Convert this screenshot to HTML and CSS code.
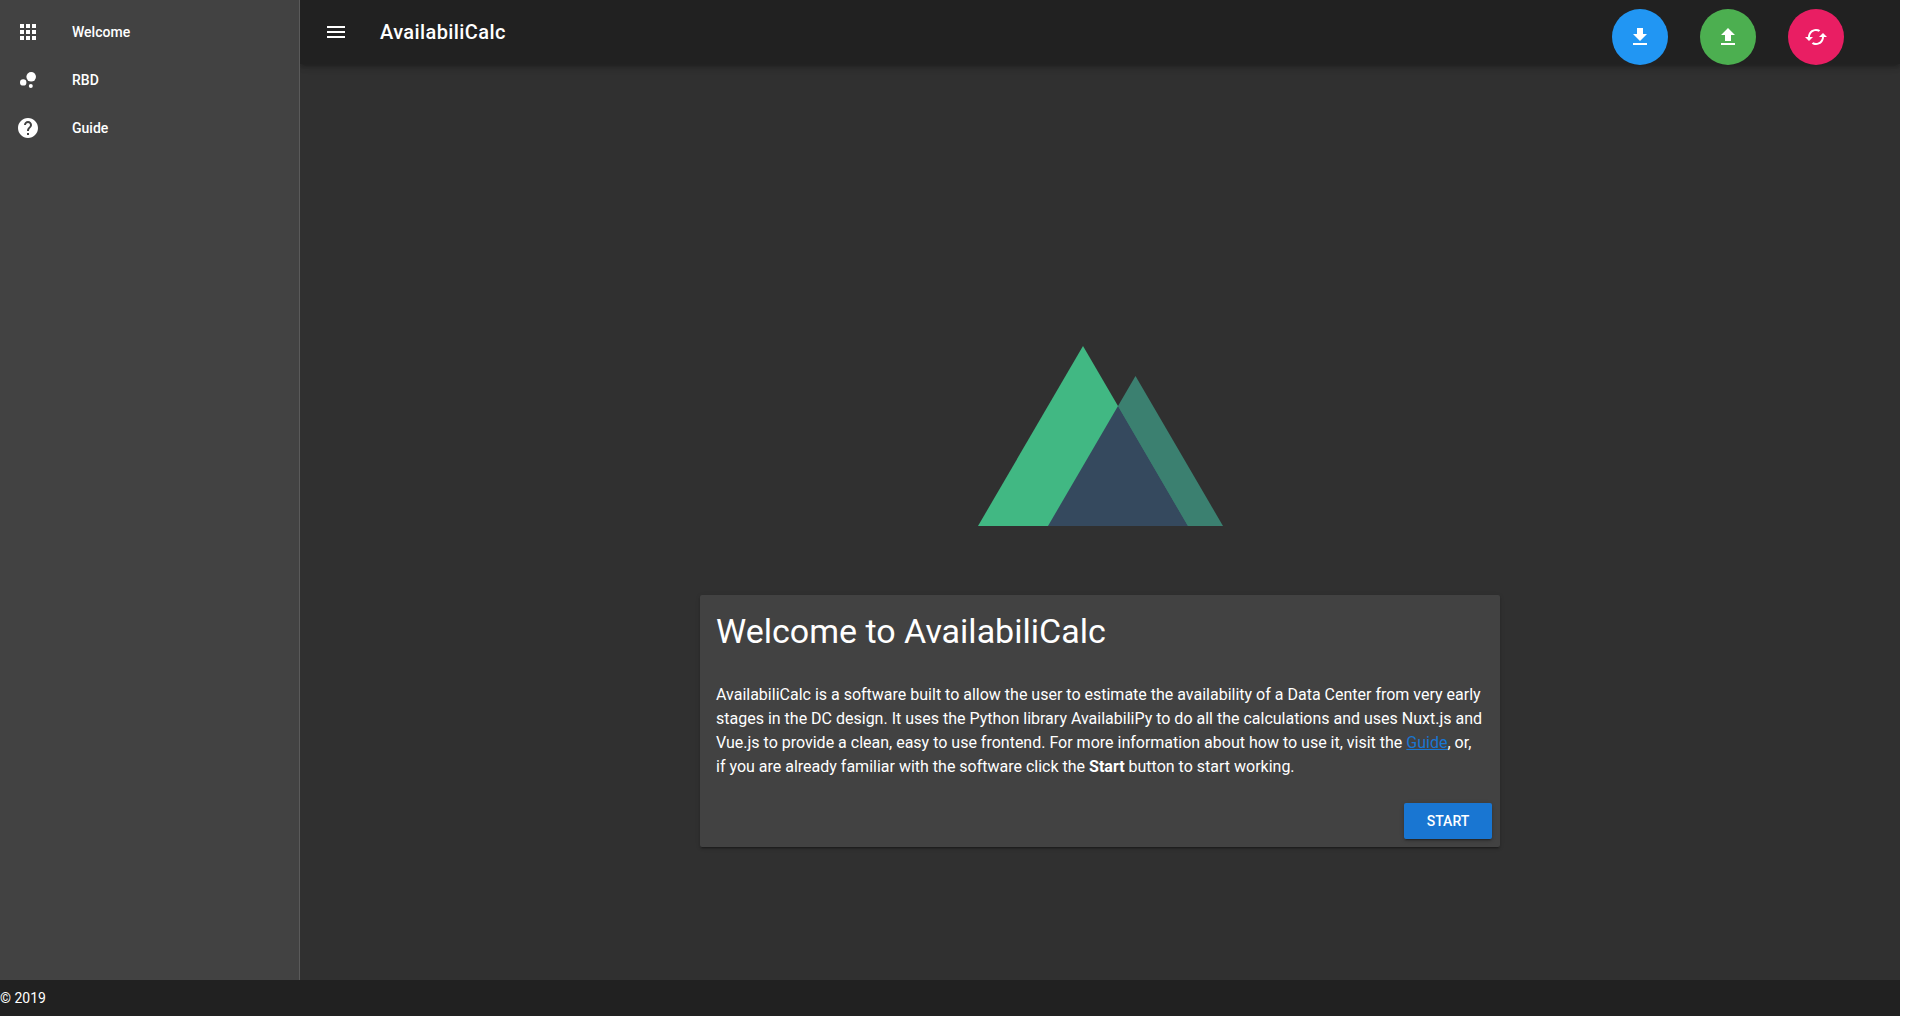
FILE: index.html
```html
<!DOCTYPE html>
<html lang="en">
<head>
<meta charset="utf-8">
<meta name="viewport" content="width=device-width, initial-scale=1">
<title>AvailabiliCalc</title>
<link rel="stylesheet" href="styles.css">
</head>
<body>
<div class="app">
  <div class="shell">
    <nav class="drawer" aria-label="Main">
      <a class="nav-item" href="#welcome">
        <svg class="icon" viewBox="0 0 24 24" aria-hidden="true"><path d="M4 8h4V4H4v4zm6 12h4v-4h-4v4zm-6 0h4v-4H4v4zm0-6h4v-4H4v4zm6 0h4v-4h-4v4zm6-10v4h4V4h-4zm-6 4h4V4h-4v4zm6 6h4v-4h-4v4zm0 6h4v-4h-4v4z"/></svg>
        <span>Welcome</span>
      </a>
      <a class="nav-item" href="#rbd">
        <svg class="icon" viewBox="0 0 24 24" aria-hidden="true"><circle cx="7.2" cy="14.4" r="3.2"/><circle cx="14.8" cy="18" r="2"/><circle cx="15.2" cy="8.8" r="4.8"/></svg>
        <span>RBD</span>
      </a>
      <a class="nav-item" href="#guide">
        <svg class="icon" viewBox="0 0 24 24" aria-hidden="true"><path d="M12 2C6.48 2 2 6.48 2 12s4.480 10 10 10 10-4.480 10-10S17.520 2 12 2zm1 17h-2v-2h2v2zm2.070-7.750l-.9.920C13.450 12.900 13 13.500 13 15h-2v-.5c0-1.100.450-2.100 1.170-2.830l1.240-1.260c.370-.360.590-.860.590-1.410 0-1.100-.9-2-2-2s-2 .9-2 2H8c0-2.210 1.790-4 4-4s4 1.790 4 4c0 .880-.360 1.680-.930 2.250z"/></svg>
        <span>Guide</span>
      </a>
    </nav>
    <div class="page">
      <header class="toolbar">
        <button class="menu-button" type="button" aria-label="Toggle menu">
          <svg class="icon" viewBox="0 0 24 24" aria-hidden="true"><path d="M3 18h18v-2H3v2zm0-5h18v-2H3v2zm0-7v2h18V6H3z"/></svg>
        </button>
        <div class="brand">AvailabiliCalc</div>
        <div class="actions">
          <button class="fab fab-blue" type="button" aria-label="Download">
            <svg class="icon" viewBox="0 0 24 24" aria-hidden="true"><path d="M19 9h-4V3H9v6H5l7 7 7-7zM5 18v2h14v-2H5z"/></svg>
          </button>
          <button class="fab fab-green" type="button" aria-label="Upload">
            <svg class="icon" viewBox="0 0 24 24" aria-hidden="true"><path d="M9 16h6v-6h4l-7-7-7 7h4zm-4 2h14v2H5z"/></svg>
          </button>
          <button class="fab fab-pink" type="button" aria-label="Reset">
            <svg class="icon" viewBox="0 0 24 24" aria-hidden="true"><path d="M19 8l-4 4h3c0 3.310-2.690 6-6 6-1.010 0-1.970-.250-2.800-.7l-1.460 1.460C8.970 19.540 10.430 20 12 20c4.420 0 8-3.580 8-8h3l-4-4zM6 12c0-3.310 2.690-6 6-6 1.010 0 1.970.250 2.800.7l1.460-1.460C15.030 4.460 13.570 4 12 4c-4.420 0-8 3.580-8 8H1l4 4 4-4H6z"/></svg>
          </button>
        </div>
      </header>
      <main class="content">
        <svg class="logo" viewBox="0 0 490 360" aria-hidden="true">
          <path fill="#3b8070" d="M315 60L490 360H140z"/>
          <path fill="#41b883" d="M210 0L420 360H0z"/>
          <path fill="#35495e" d="M280 120L420 360H140z"/>
        </svg>
        <section class="card">
          <h1 class="card-title">Welcome to AvailabiliCalc</h1>
          <p class="card-text">AvailabiliCalc is a software built to allow the user to estimate the availability of a Data Center from very early stages in the DC design. It uses the Python library AvailabiliPy to do all the calculations and uses Nuxt.js and Vue.js to provide a clean, easy to use frontend. For more information about how to use it, visit the <a class="link" href="#guide">Guide</a>, or, if you are already familiar with the software click the <strong>Start</strong> button to start working.</p>
          <div class="card-actions">
            <button class="start" type="button">START</button>
          </div>
        </section>
      </main>
    </div>
  </div>
  <footer class="footer">© 2019</footer>
</div>
</body>
</html>
```
FILE: styles.css
```css
*, *::before, *::after { box-sizing: border-box; }

body {
  margin: 0;
  background: #fff;
  color: #fff;
  font-family: Roboto, "Liberation Sans", sans-serif;
  font-size: 14px;
  line-height: 20px;
}

button {
  padding: 0;
  border: 0;
  color: inherit;
  font: inherit;
  cursor: pointer;
}

.icon {
  display: block;
  width: 24px;
  height: 24px;
  fill: currentColor;
}

.app {
  display: flex;
  flex-direction: column;
  min-height: 100vh;
  margin-right: 20px;
  background: #303030;
}

.shell { display: flex; flex: 1; }

.drawer {
  flex: 0 0 300px;
  padding: 8px 0;
  border-right: 1px solid #5a5a5a;
  background: #424242;
}

.nav-item {
  display: flex;
  align-items: center;
  gap: 32px;
  height: 48px;
  padding: 0 16px;
  color: inherit;
  font-weight: 500;
  text-decoration: none;
}

.page {
  display: flex;
  flex: 1;
  flex-direction: column;
  min-width: 0;
  overflow: hidden;
}

.toolbar {
  display: flex;
  align-items: center;
  height: 64px;
  padding: 0 56px 0 24px;
  background: #212121;
  box-shadow: 0 2px 4px -1px rgba(0, 0, 0, .2), 0 4px 5px rgba(0, 0, 0, .14), 0 1px 10px rgba(0, 0, 0, .12);
}

.menu-button { background: none; }

.brand {
  margin-left: 32px;
  font-size: 20px;
  font-weight: 500;
  letter-spacing: .02em;
}

.actions {
  display: flex;
  gap: 32px;
  margin-left: auto;
  padding-top: 10px;
}

.fab {
  display: grid;
  place-items: center;
  width: 56px;
  height: 56px;
  border-radius: 50%;
}

.fab-blue { background: #2196f3; }
.fab-green { background: #4caf50; }
.fab-pink { background: #e91e63; }

.content {
  display: flex;
  flex: 1;
  flex-direction: column;
  align-items: center;
  justify-content: center;
  padding: 149px 24px 0;
}

.logo {
  width: 245px;
  height: 180px;
  margin-bottom: 69px;
}

.card {
  width: 100%;
  max-width: 800px;
  border-radius: 2px;
  background: #424242;
  box-shadow: 0 3px 1px -2px rgba(0, 0, 0, .2), 0 2px 2px rgba(0, 0, 0, .14), 0 1px 5px rgba(0, 0, 0, .12);
}

.card-title {
  margin: 0;
  padding: 16px;
  font-size: 34px;
  font-weight: 400;
  line-height: 40px;
}

.card-text {
  margin: 0;
  padding: 16px;
  font-size: 16px;
  line-height: 24px;
}

.link { color: #1976d2; }

.card-actions {
  display: flex;
  justify-content: flex-end;
  padding: 8px;
}

.start {
  min-width: 88px;
  height: 36px;
  border-radius: 2px;
  background: #1976d2;
  box-shadow: 0 3px 1px -2px rgba(0, 0, 0, .2), 0 2px 2px rgba(0, 0, 0, .14), 0 1px 5px rgba(0, 0, 0, .12);
  font-weight: 500;
}

.footer {
  display: flex;
  align-items: center;
  height: 36px;
  background: #212121;
}
```
